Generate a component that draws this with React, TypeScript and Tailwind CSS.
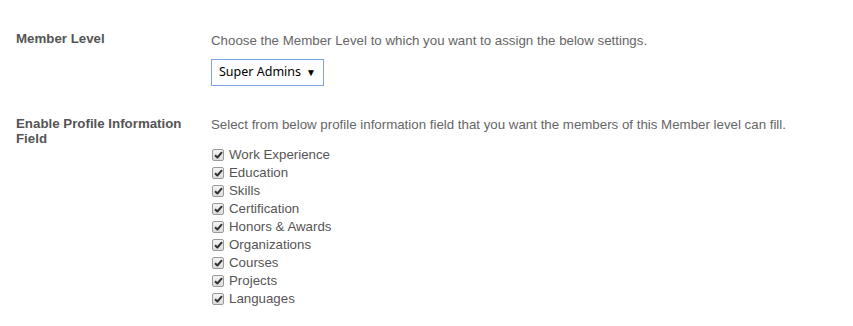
import React from "react";

const items = [
  "Work Experience",
  "Education",
  "Skills",
  "Certification",
  "Honors & Awards",
  "Organizations",
  "Courses",
  "Projects",
  "Languages",
];

function Check() {
  return (
    <span className="mr-[5px] flex h-[12px] w-[12px] shrink-0 items-center justify-center rounded-[2px] border border-[#9a9a9a] bg-gradient-to-b from-[#f4f4f4] to-[#dcdcdc]">
      <svg width="9" height="8" viewBox="0 0 9 8">
        <path d="M1 4.2 L3.4 6.5 L8 1.2" fill="none" stroke="#333" strokeWidth="2" strokeLinejoin="round" />
      </svg>
    </span>
  );
}

export default function App() {
  return (
    <div
      className="min-h-[326px] w-[853px] bg-white pt-[32px] text-[13.3px]"
      style={{ fontFamily: "Arial, 'Liberation Sans', sans-serif" }}
    >
      <div className="flex items-start">
        <div className="w-[211px] shrink-0 pl-[16px] text-[13.3px] font-bold leading-[14px] text-[#555]">
          Member Level
        </div>
        <div className="flex flex-col items-start">
          <div className="leading-[18px] text-[#666]">
            Choose the Member Level to which you want to assign the below settings.
          </div>
          <div
            className="mt-[9px] flex h-[27px] w-[113px] items-center justify-between border border-[#7ea4e6] bg-white pl-[7px] pr-[7px] text-[12.5px] text-black"
            style={{ fontFamily: "'Noto Sans', 'Open Sans', sans-serif" }}
          >
            <span>Super Admins</span>
            <span className="text-[10px]">▼</span>
          </div>
        </div>
      </div>

      <div className="mt-[30px] flex items-start">
        <div className="w-[211px] shrink-0 pl-[16px] pr-[28px] text-[13.3px] font-bold leading-[15px] text-[#555]">
          Enable Profile Information Field
        </div>
        <div className="flex flex-col items-start">
          <div className="leading-[18px] text-[#666]">
            Select from below profile information field that you want the members of this Member level can fill.
          </div>
          <div className="mt-[12px] flex flex-col">
            {items.map((it) => (
              <div key={it} className="flex h-[18px] items-center pl-[1px] leading-[18px] text-[#555]">
                <Check />
                <span>{it}</span>
              </div>
            ))}
          </div>
        </div>
      </div>
    </div>
  );
}
